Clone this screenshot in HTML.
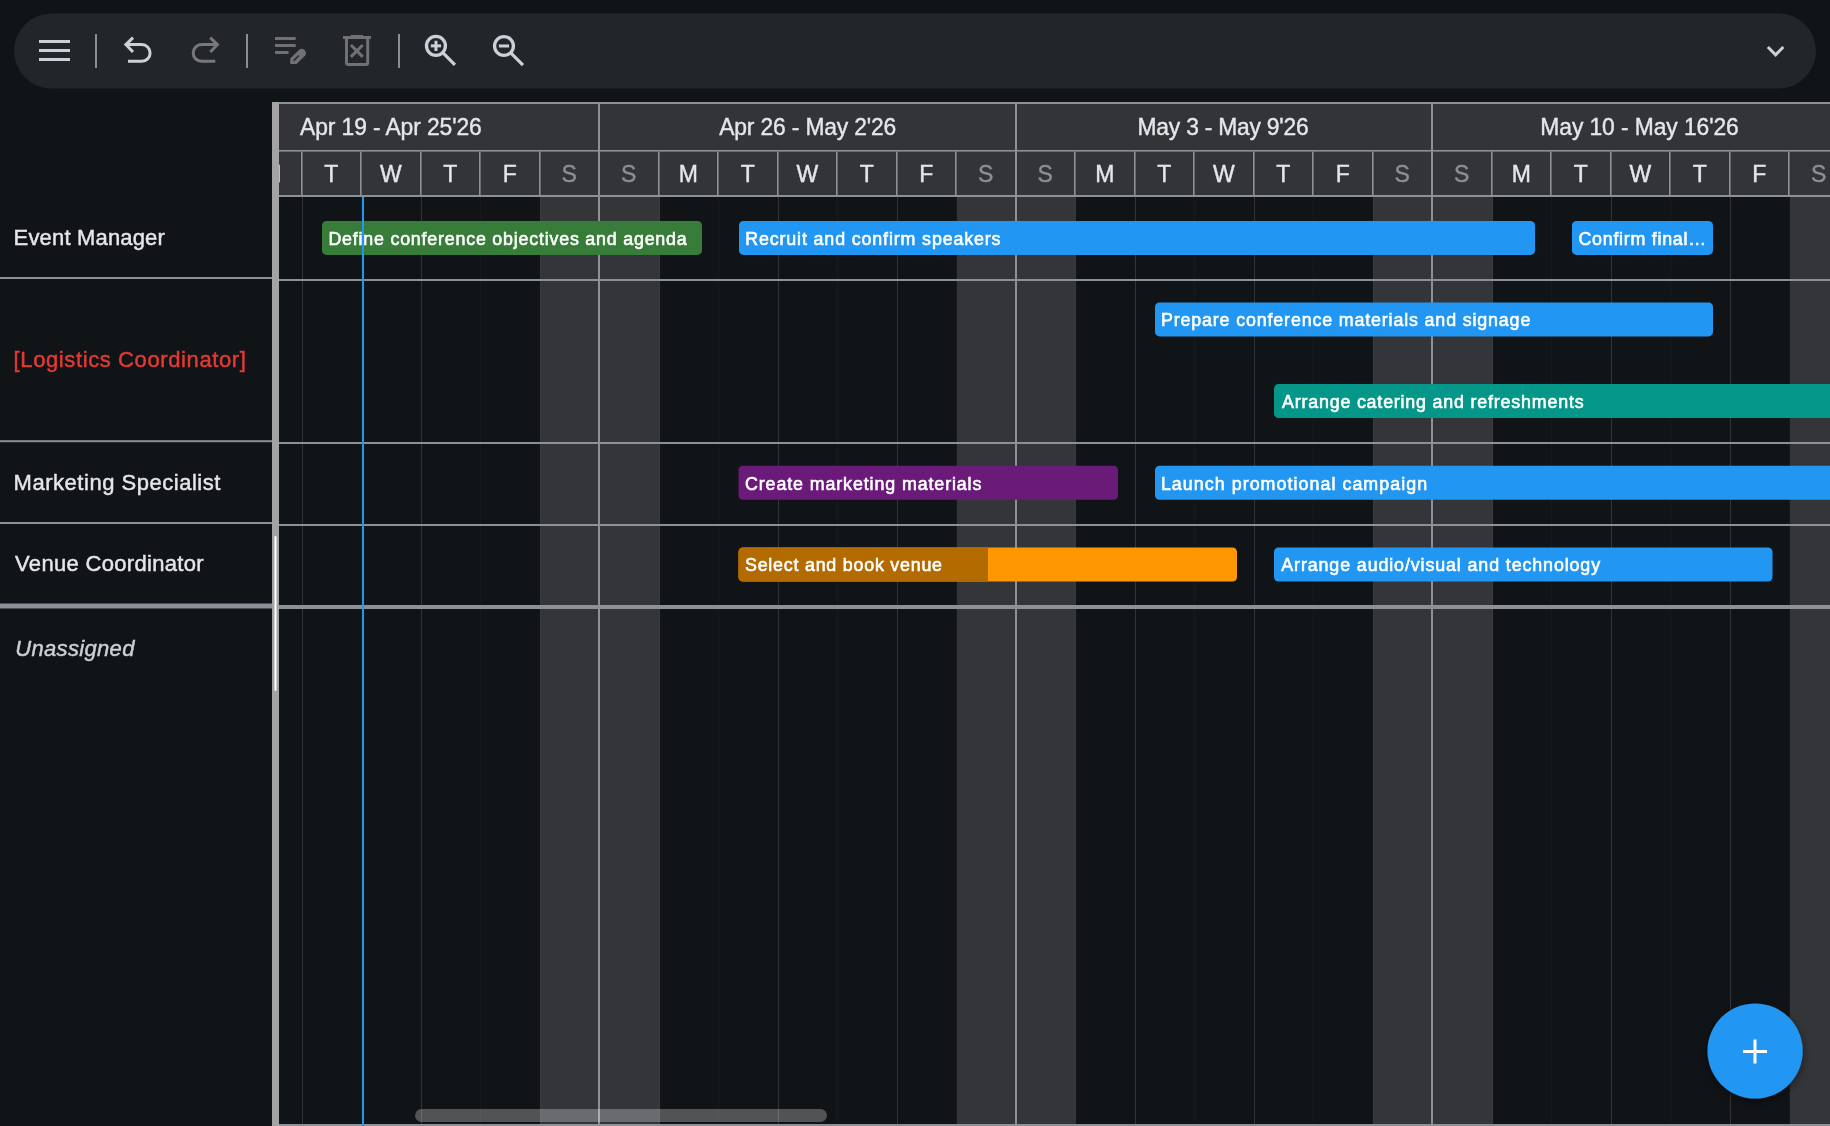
<!DOCTYPE html>
<html><head><meta charset="utf-8"><title>Gantt</title>
<style>
html,body{margin:0;padding:0;background:#111417;width:1830px;height:1126px;overflow:hidden;font-family:"Liberation Sans",sans-serif;}
svg{display:block;will-change:transform;}
</style></head><body>
<svg width="1830" height="1126" viewBox="0 0 1830 1126" font-family="Liberation Sans, sans-serif"><rect x="14" y="13.5" width="1802" height="75" rx="37.5" fill="#232629"/>
<rect x="39" y="40" width="31" height="3" fill="#cdd0d8"/>
<rect x="39" y="49" width="31" height="3" fill="#cdd0d8"/>
<rect x="39" y="58" width="31" height="3" fill="#cdd0d8"/>
<rect x="95" y="34" width="2" height="34" fill="#8a8e96"/>
<rect x="246" y="34" width="2" height="34" fill="#8a8e96"/>
<rect x="398" y="34" width="2" height="34" fill="#8a8e96"/>
<g><path d="M128 61.36 H141.67 A8.43 8.43 0 0 0 141.67 44.5 H127" fill="none" stroke="#cdd0d8" stroke-width="3"/><path d="M133.03 37.68 L125.9 44.6 L133 51.95" fill="none" stroke="#cdd0d8" stroke-width="3" stroke-miterlimit="10"/></g>
<g transform="matrix(-1 0 0 1 343.3 0)"><path d="M128 61.36 H141.67 A8.43 8.43 0 0 0 141.67 44.5 H127" fill="none" stroke="#76787c" stroke-width="3"/><path d="M133.03 37.68 L125.9 44.6 L133 51.95" fill="none" stroke="#76787c" stroke-width="3" stroke-miterlimit="10"/></g>
<rect x="275" y="37" width="20.7" height="3" fill="#6f7175"/>
<rect x="275" y="44" width="20.7" height="3" fill="#6f7175"/>
<rect x="275" y="51" width="13.6" height="3" fill="#6f7175"/>
<path d="M290.2 64.1 V58.6 L298.92 50.02 A4.15 4.15 0 0 1 304.78 55.88 L296.5 64.1 Z" fill="#6f7175"/>
<path d="M293.6 60.7 L298.9 55.4" stroke="#232629" stroke-width="1.4"/>
<rect x="343" y="36" width="28" height="3" fill="#6f7175"/>
<rect x="351" y="35" width="12" height="1.5" fill="#6f7175"/>
<path d="M346.5 38 V62.4 A2 2 0 0 0 348.5 64.4 H365.7 A2 2 0 0 0 367.7 62.4 V38" fill="none" stroke="#6f7175" stroke-width="3"/>
<path d="M350.9 45 L362.8 56.9 M362.8 45 L350.9 56.9" stroke="#6f7175" stroke-width="3"/>
<circle cx="435.95" cy="45.87" r="9.45" fill="none" stroke="#cdd0d8" stroke-width="3.3"/>
<path d="M442.25 52.169999999999995 L454.95 64.97" stroke="#cdd0d8" stroke-width="3.2"/>
<rect x="430.84999999999997" y="44.37" width="10.2" height="3" fill="#cdd0d8"/>
<rect x="434.45" y="40.769999999999996" width="3" height="10.2" fill="#cdd0d8"/>
<circle cx="503.98" cy="45.98" r="9.45" fill="none" stroke="#cdd0d8" stroke-width="3.3"/>
<path d="M510.28000000000003 52.279999999999994 L522.98 65.08" stroke="#cdd0d8" stroke-width="3.2"/>
<rect x="498.88" y="44.48" width="10.2" height="3" fill="#cdd0d8"/>
<path d="M1767.85 47.05 L1775.6 54.8 L1783.35 47.05" fill="none" stroke="#cdd0d8" stroke-width="3"/>
<rect x="279" y="102" width="1551" height="95" fill="#333438"/>
<rect x="124" y="197" width="119" height="929" fill="#343539"/>
<rect x="540" y="197" width="120" height="929" fill="#343539"/>
<rect x="957" y="197" width="119" height="929" fill="#343539"/>
<rect x="1373" y="197" width="120" height="929" fill="#343539"/>
<rect x="1790" y="197" width="119" height="929" fill="#343539"/>
<rect x="279" y="102" width="1551" height="2" fill="#8b9099"/>
<rect x="279" y="150" width="1551" height="1.6" fill="#8b9099"/>
<rect x="279" y="195" width="1551" height="2" fill="#8b9099"/>
<rect x="182" y="104" width="2" height="1022" fill="#8b9099"/>
<text x="212.25" y="182" font-size="23" fill="#8e8f94" text-anchor="middle" stroke="#8e8f94" stroke-width="0.4">S</text>
<rect x="241" y="151.6" width="1.6" height="43.4" fill="#8b9099"/>
<rect x="242" y="197" width="1" height="929" fill="#37383c"/>
<text x="271.75" y="182" font-size="23" fill="#e6e6ea" text-anchor="middle" stroke="#e6e6ea" stroke-width="0.4">M</text>
<rect x="301" y="151.6" width="1.6" height="43.4" fill="#8b9099"/>
<rect x="302" y="197" width="1" height="929" fill="#333438"/>
<text x="331.25" y="182" font-size="23" fill="#e6e6ea" text-anchor="middle" stroke="#e6e6ea" stroke-width="0.4">T</text>
<rect x="360" y="151.6" width="1.6" height="43.4" fill="#8b9099"/>
<rect x="361" y="197" width="1" height="929" fill="#17191d"/>
<text x="390.75" y="182" font-size="23" fill="#e6e6ea" text-anchor="middle" stroke="#e6e6ea" stroke-width="0.4">W</text>
<rect x="420" y="151.6" width="1.6" height="43.4" fill="#8b9099"/>
<rect x="421" y="197" width="1" height="929" fill="#333438"/>
<text x="450.25" y="182" font-size="23" fill="#e6e6ea" text-anchor="middle" stroke="#e6e6ea" stroke-width="0.4">T</text>
<rect x="479" y="151.6" width="1.6" height="43.4" fill="#8b9099"/>
<rect x="480" y="197" width="1" height="929" fill="#17191d"/>
<text x="509.75" y="182" font-size="23" fill="#e6e6ea" text-anchor="middle" stroke="#e6e6ea" stroke-width="0.4">F</text>
<rect x="539" y="151.6" width="1.6" height="43.4" fill="#8b9099"/>
<rect x="540" y="197" width="1" height="929" fill="#3a3b3f"/>
<text x="569.25" y="182" font-size="23" fill="#8e8f94" text-anchor="middle" stroke="#8e8f94" stroke-width="0.4">S</text>
<rect x="598" y="104" width="2" height="1022" fill="#8b9099"/>
<text x="628.75" y="182" font-size="23" fill="#8e8f94" text-anchor="middle" stroke="#8e8f94" stroke-width="0.4">S</text>
<rect x="658" y="151.6" width="1.6" height="43.4" fill="#8b9099"/>
<rect x="659" y="197" width="1" height="929" fill="#3a3b3f"/>
<text x="688.25" y="182" font-size="23" fill="#e6e6ea" text-anchor="middle" stroke="#e6e6ea" stroke-width="0.4">M</text>
<rect x="717" y="151.6" width="1.6" height="43.4" fill="#8b9099"/>
<rect x="718" y="197" width="1" height="929" fill="#17191d"/>
<text x="747.75" y="182" font-size="23" fill="#e6e6ea" text-anchor="middle" stroke="#e6e6ea" stroke-width="0.4">T</text>
<rect x="777" y="151.6" width="1.6" height="43.4" fill="#8b9099"/>
<rect x="778" y="197" width="1" height="929" fill="#333438"/>
<text x="807.25" y="182" font-size="23" fill="#e6e6ea" text-anchor="middle" stroke="#e6e6ea" stroke-width="0.4">W</text>
<rect x="836" y="151.6" width="1.6" height="43.4" fill="#8b9099"/>
<rect x="837" y="197" width="1" height="929" fill="#17191d"/>
<text x="866.75" y="182" font-size="23" fill="#e6e6ea" text-anchor="middle" stroke="#e6e6ea" stroke-width="0.4">T</text>
<rect x="896" y="151.6" width="1.6" height="43.4" fill="#8b9099"/>
<rect x="897" y="197" width="1" height="929" fill="#333438"/>
<text x="926.25" y="182" font-size="23" fill="#e6e6ea" text-anchor="middle" stroke="#e6e6ea" stroke-width="0.4">F</text>
<rect x="955" y="151.6" width="1.6" height="43.4" fill="#8b9099"/>
<rect x="956" y="197" width="1" height="929" fill="#17191d"/>
<text x="985.75" y="182" font-size="23" fill="#8e8f94" text-anchor="middle" stroke="#8e8f94" stroke-width="0.4">S</text>
<rect x="1015" y="104" width="2" height="1022" fill="#8b9099"/>
<text x="1045.25" y="182" font-size="23" fill="#8e8f94" text-anchor="middle" stroke="#8e8f94" stroke-width="0.4">S</text>
<rect x="1074" y="151.6" width="1.6" height="43.4" fill="#8b9099"/>
<rect x="1075" y="197" width="1" height="929" fill="#37383c"/>
<text x="1104.75" y="182" font-size="23" fill="#e6e6ea" text-anchor="middle" stroke="#e6e6ea" stroke-width="0.4">M</text>
<rect x="1134" y="151.6" width="1.6" height="43.4" fill="#8b9099"/>
<rect x="1135" y="197" width="1" height="929" fill="#333438"/>
<text x="1164.25" y="182" font-size="23" fill="#e6e6ea" text-anchor="middle" stroke="#e6e6ea" stroke-width="0.4">T</text>
<rect x="1193" y="151.6" width="1.6" height="43.4" fill="#8b9099"/>
<rect x="1194" y="197" width="1" height="929" fill="#17191d"/>
<text x="1223.75" y="182" font-size="23" fill="#e6e6ea" text-anchor="middle" stroke="#e6e6ea" stroke-width="0.4">W</text>
<rect x="1253" y="151.6" width="1.6" height="43.4" fill="#8b9099"/>
<rect x="1254" y="197" width="1" height="929" fill="#333438"/>
<text x="1283.25" y="182" font-size="23" fill="#e6e6ea" text-anchor="middle" stroke="#e6e6ea" stroke-width="0.4">T</text>
<rect x="1312" y="151.6" width="1.6" height="43.4" fill="#8b9099"/>
<rect x="1313" y="197" width="1" height="929" fill="#17191d"/>
<text x="1342.75" y="182" font-size="23" fill="#e6e6ea" text-anchor="middle" stroke="#e6e6ea" stroke-width="0.4">F</text>
<rect x="1372" y="151.6" width="1.6" height="43.4" fill="#8b9099"/>
<rect x="1373" y="197" width="1" height="929" fill="#3a3b3f"/>
<text x="1402.25" y="182" font-size="23" fill="#8e8f94" text-anchor="middle" stroke="#8e8f94" stroke-width="0.4">S</text>
<rect x="1431" y="104" width="2" height="1022" fill="#8b9099"/>
<text x="1461.75" y="182" font-size="23" fill="#8e8f94" text-anchor="middle" stroke="#8e8f94" stroke-width="0.4">S</text>
<rect x="1491" y="151.6" width="1.6" height="43.4" fill="#8b9099"/>
<rect x="1492" y="197" width="1" height="929" fill="#3a3b3f"/>
<text x="1521.25" y="182" font-size="23" fill="#e6e6ea" text-anchor="middle" stroke="#e6e6ea" stroke-width="0.4">M</text>
<rect x="1550" y="151.6" width="1.6" height="43.4" fill="#8b9099"/>
<rect x="1551" y="197" width="1" height="929" fill="#17191d"/>
<text x="1580.75" y="182" font-size="23" fill="#e6e6ea" text-anchor="middle" stroke="#e6e6ea" stroke-width="0.4">T</text>
<rect x="1610" y="151.6" width="1.6" height="43.4" fill="#8b9099"/>
<rect x="1611" y="197" width="1" height="929" fill="#333438"/>
<text x="1640.25" y="182" font-size="23" fill="#e6e6ea" text-anchor="middle" stroke="#e6e6ea" stroke-width="0.4">W</text>
<rect x="1669" y="151.6" width="1.6" height="43.4" fill="#8b9099"/>
<rect x="1670" y="197" width="1" height="929" fill="#17191d"/>
<text x="1699.75" y="182" font-size="23" fill="#e6e6ea" text-anchor="middle" stroke="#e6e6ea" stroke-width="0.4">T</text>
<rect x="1729" y="151.6" width="1.6" height="43.4" fill="#8b9099"/>
<rect x="1730" y="197" width="1" height="929" fill="#333438"/>
<text x="1759.25" y="182" font-size="23" fill="#e6e6ea" text-anchor="middle" stroke="#e6e6ea" stroke-width="0.4">F</text>
<rect x="1788" y="151.6" width="1.6" height="43.4" fill="#8b9099"/>
<rect x="1789" y="197" width="1" height="929" fill="#17191d"/>
<text x="1818.75" y="182" font-size="23" fill="#8e8f94" text-anchor="middle" stroke="#8e8f94" stroke-width="0.4">S</text>
<rect x="1848" y="104" width="2" height="1022" fill="#8b9099"/>
<text x="1878.25" y="182" font-size="23" fill="#8e8f94" text-anchor="middle" stroke="#8e8f94" stroke-width="0.4">S</text>
<text transform="translate(390.9 134.5) scale(0.98 1)" x="0" y="0" font-size="23.3" fill="#e6e6ea" text-anchor="middle" textLength="185.32" lengthAdjust="spacing" stroke="#e6e6ea" stroke-width="0.4">Apr 19 - Apr 25'26</text>
<text transform="translate(807.75 134.5) scale(0.98 1)" x="0" y="0" font-size="23.3" fill="#e6e6ea" text-anchor="middle" textLength="180.62" lengthAdjust="spacing" stroke="#e6e6ea" stroke-width="0.4">Apr 26 - May 2'26</text>
<text transform="translate(1223.1 134.5) scale(0.98 1)" x="0" y="0" font-size="23.3" fill="#e6e6ea" text-anchor="middle" textLength="174.6" lengthAdjust="spacing" stroke="#e6e6ea" stroke-width="0.4">May 3 - May 9'26</text>
<text transform="translate(1639.55 134.5) scale(0.98 1)" x="0" y="0" font-size="23.3" fill="#e6e6ea" text-anchor="middle" textLength="202.49" lengthAdjust="spacing" stroke="#e6e6ea" stroke-width="0.4">May 10 - May 16'26</text>
<rect x="279" y="279" width="1551" height="2" fill="#8b9099"/>
<rect x="279" y="442" width="1551" height="2" fill="#8b9099"/>
<rect x="279" y="524" width="1551" height="2" fill="#8b9099"/>
<rect x="279" y="605" width="1551" height="4" fill="#8b9099"/>
<rect x="279" y="1124" width="1551" height="2" fill="#8b9099"/>
<rect x="322" y="220.9" width="380" height="34" rx="4.5" fill="#377c38"/>
<text transform="translate(328.4 244.7) scale(0.97 1)" x="0" y="0" font-size="18.4" fill="#ffffff" text-anchor="start" textLength="369.4" lengthAdjust="spacing" stroke="#ffffff" stroke-width="0.6">Define conference objectives and agenda</text>
<rect x="739" y="220.9" width="796" height="34" rx="4.5" fill="#2196f3"/>
<text transform="translate(745.2 244.7) scale(0.97 1)" x="0" y="0" font-size="18.4" fill="#ffffff" text-anchor="start" textLength="263.23" lengthAdjust="spacing" stroke="#ffffff" stroke-width="0.6">Recruit and confirm speakers</text>
<rect x="1572" y="220.9" width="141" height="34" rx="4.5" fill="#2196f3"/>
<text transform="translate(1578.5 244.7) scale(0.97 1)" x="0" y="0" font-size="18.4" fill="#ffffff" text-anchor="start" textLength="131.42" lengthAdjust="spacing" stroke="#ffffff" stroke-width="0.6">Confirm final…</text>
<rect x="1155" y="302.4" width="558" height="34" rx="4.5" fill="#2196f3"/>
<text transform="translate(1161.0 326.2) scale(0.97 1)" x="0" y="0" font-size="18.4" fill="#ffffff" text-anchor="start" textLength="380.73" lengthAdjust="spacing" stroke="#ffffff" stroke-width="0.6">Prepare conference materials and signage</text>
<rect x="1274" y="384.1" width="566" height="34" rx="4.5" fill="#049689"/>
<text transform="translate(1282.0 407.9) scale(0.97 1)" x="0" y="0" font-size="18.4" fill="#ffffff" text-anchor="start" textLength="310.93" lengthAdjust="spacing" stroke="#ffffff" stroke-width="0.6">Arrange catering and refreshments</text>
<rect x="738.5" y="465.8" width="379.5" height="34" rx="4.5" fill="#6a1b7a"/>
<text transform="translate(745.0 489.6) scale(0.97 1)" x="0" y="0" font-size="18.4" fill="#ffffff" text-anchor="start" textLength="243.73" lengthAdjust="spacing" stroke="#ffffff" stroke-width="0.6">Create marketing materials</text>
<rect x="1155" y="465.8" width="685" height="34" rx="4.5" fill="#2196f3"/>
<text transform="translate(1160.9 489.6) scale(0.97 1)" x="0" y="0" font-size="18.4" fill="#ffffff" text-anchor="start" textLength="274.44" lengthAdjust="spacing" stroke="#ffffff" stroke-width="0.6">Launch promotional campaign</text>
<rect x="738.5" y="547.5" width="498.5" height="34" rx="4.5" fill="#ff9800"/>
<path d="M743.0 547.5 H988 V581.5 H743.0 A4.5 4.5 0 0 1 738.5 577.0 V552.0 A4.5 4.5 0 0 1 743.0 547.5 Z" fill="#b36b00"/>
<text transform="translate(745.0 571.3) scale(0.97 1)" x="0" y="0" font-size="18.4" fill="#ffffff" text-anchor="start" textLength="203.11" lengthAdjust="spacing" stroke="#ffffff" stroke-width="0.6">Select and book venue</text>
<rect x="1274" y="547.5" width="498.5" height="34" rx="4.5" fill="#2196f3"/>
<text transform="translate(1281.3 571.3) scale(0.97 1)" x="0" y="0" font-size="18.4" fill="#ffffff" text-anchor="start" textLength="328.66" lengthAdjust="spacing" stroke="#ffffff" stroke-width="0.6">Arrange audio/visual and technology</text>
<rect x="362" y="197" width="2" height="929" fill="#2196f3"/>
<rect x="0" y="102" width="272" height="1024" fill="#111417"/>
<rect x="0" y="277" width="272" height="2" fill="#8b9099"/>
<rect x="0" y="440.2" width="272" height="2" fill="#8b9099"/>
<rect x="0" y="522" width="272" height="2" fill="#8b9099"/>
<rect x="0" y="603.5" width="272" height="5" fill="#8b9099"/>
<text transform="translate(13.6 244.8) scale(0.97 1)" x="0" y="0" font-size="22.7" fill="#e6e6ea" text-anchor="start" textLength="155.92" lengthAdjust="spacing" stroke="#e6e6ea" stroke-width="0.45">Event Manager</text>
<text transform="translate(13.6 366.6) scale(0.97 1)" x="0" y="0" font-size="22.7" fill="#e53935" text-anchor="start" textLength="239.44" lengthAdjust="spacing" stroke="#e53935" stroke-width="0.45">[Logistics Coordinator]</text>
<text transform="translate(13.6 490.3) scale(0.97 1)" x="0" y="0" font-size="22.7" fill="#e6e6ea" text-anchor="start" textLength="213.22" lengthAdjust="spacing" stroke="#e6e6ea" stroke-width="0.45">Marketing Specialist</text>
<text transform="translate(15.1 571) scale(0.97 1)" x="0" y="0" font-size="22.7" fill="#e6e6ea" text-anchor="start" textLength="194.33" lengthAdjust="spacing" stroke="#e6e6ea" stroke-width="0.45">Venue Coordinator</text>
<text transform="translate(15.2 656.3) scale(0.97 1)" x="0" y="0" font-size="22.7" fill="#cdd0d8" text-anchor="start" textLength="122.91" lengthAdjust="spacing" font-style="italic" stroke="#cdd0d8" stroke-width="0.45">Unassigned</text>
<rect x="272" y="102" width="7" height="1024" fill="#a3a3a3"/>
<rect x="274.5" y="536" width="2" height="155" rx="1" fill="#ffffff"/>
<rect x="415" y="1109" width="412" height="13" rx="6.5" fill="#ffffff" fill-opacity="0.27"/>
<defs><filter id="sh" x="-50%" y="-50%" width="200%" height="200%"><feDropShadow dx="0" dy="3" stdDeviation="4" flood-color="#000" flood-opacity="0.45"/></filter></defs>
<circle cx="1755.1" cy="1051" r="47.6" fill="#2196f3" filter="url(#sh)"/>
<rect x="1743" y="1050" width="24" height="3" fill="#ffffff"/>
<rect x="1753.5" y="1039.5" width="3" height="24" fill="#ffffff"/></svg>
</body></html>
